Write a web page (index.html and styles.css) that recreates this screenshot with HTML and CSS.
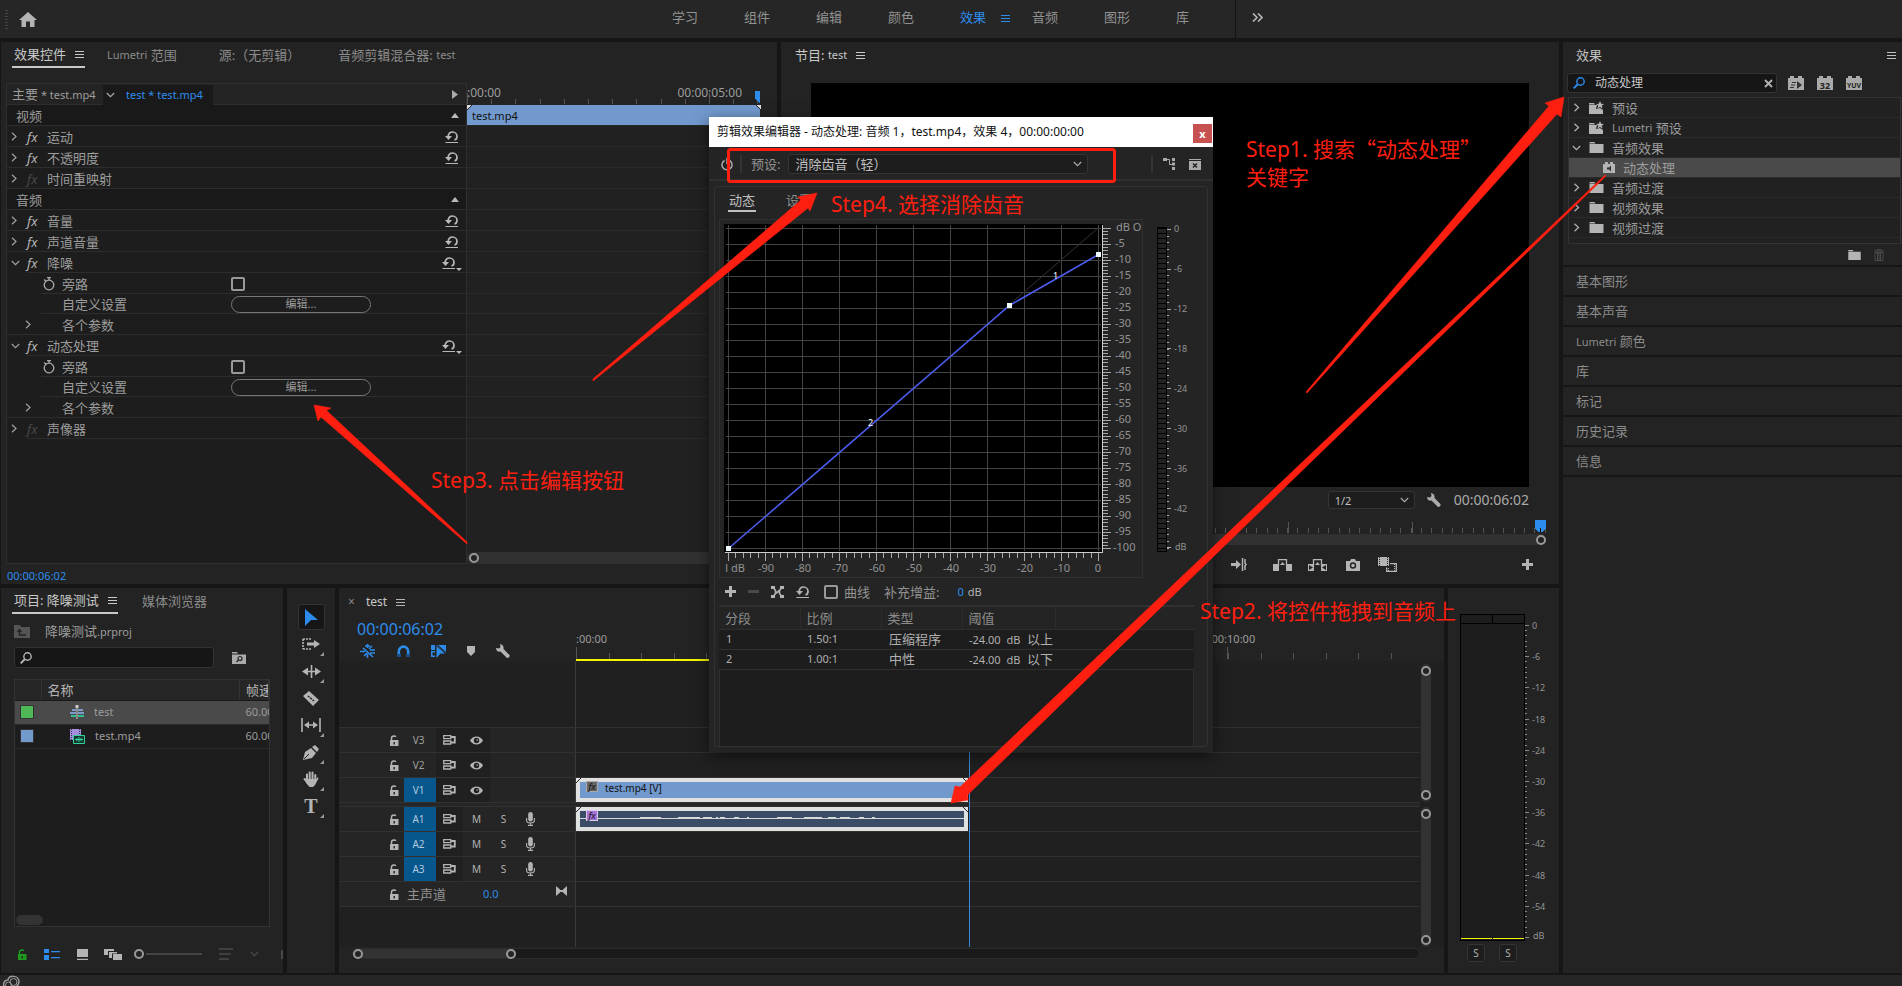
FILE: index.html
```html
<!DOCTYPE html>
<html lang="zh-CN">
<head>
<meta charset="utf-8">
<title>降噪测试.prproj</title>
<link rel="stylesheet" href="styles.css">
</head>
<body>
<svg class="defs" aria-hidden="true">
  <symbol id="i-menu" viewBox="0 0 9 9"><path d="M0 1.500h9M0 4.500h9M0 7.500h9" stroke="currentColor" shape-rendering="crispEdges"/></symbol>
  <symbol id="i-right" viewBox="0 0 6 9"><path d="M1 .8l4 3.700-4 3.700" fill="none" stroke="currentColor" stroke-width="1.200"/></symbol>
  <symbol id="i-down" viewBox="0 0 9 6"><path d="M.8 1l3.700 3.600L8.200 1" fill="none" stroke="currentColor" stroke-width="1.200"/></symbol>
  <symbol id="i-up" viewBox="0 0 8 5"><path d="M0 5l4-5 4 5z" fill="currentColor"/></symbol>
  <symbol id="i-reset" viewBox="0 0 13 12"><path d="M3 5.500C3.500 2.500 5 1 7.500 1 10 1 12 3 12 5.200 12 7.200 11 8.700 9.500 9" fill="none" stroke="currentColor" stroke-width="1.700"/><path d="M0 5h7L3.500 9z" fill="currentColor"/><path d="M.5 11.500H13" stroke="currentColor"/></symbol>
  <symbol id="i-watch" viewBox="0 0 12 14"><circle cx="6" cy="8" r="4.800" fill="none" stroke="currentColor" stroke-width="1.300"/><path d="M4 .7h4M6 1v2M1.200 2.500l2 2" stroke="currentColor" stroke-width="1.300"/></symbol>
  <symbol id="i-search" viewBox="0 0 12 12"><circle cx="7.500" cy="4.500" r="3.700" fill="none" stroke="currentColor" stroke-width="1.400"/><path d="M5 7L.7 11.300" stroke="currentColor" stroke-width="1.900"/></symbol>
  <symbol id="i-folder" viewBox="0 0 14 11"><path d="M0 0h5l1 1.500H0zM0 2h14v9H0z" fill="currentColor"/></symbol>
  <symbol id="i-star" viewBox="0 0 15 13"><path d="M0 2h5l1 1.500H0zM0 4h8l-1 4 4-1 3 2v4H0z" fill="currentColor"/><path d="M11 0l1.200 2.700 2.800.2-2.200 1.800.8 2.800L11 6 8.400 7.500l.8-2.800L7 2.900l2.800-.2z" fill="currentColor"/></symbol>
  <symbol id="i-lock" viewBox="0 0 10 11"><path d="M1 5h8.500v6H1z" fill="currentColor"/><path d="M2.500 5V3.200C2.500 1.800 3.500 1 5 1c.8 0 1.500.3 1.900.8" fill="none" stroke="currentColor" stroke-width="1.500"/><path d="M5.200 7v2.500" stroke="#222" stroke-width="1.400"/></symbol>
  <symbol id="i-sync" viewBox="0 0 13 10"><path d="M.7.7h7.100v3H.7zM.7 6h7.100v3H.7z" fill="none" stroke="currentColor" stroke-width="1.300"/><path d="M8 2h3.800v5.500H8" fill="none" stroke="currentColor" stroke-width="1.800"/></symbol>
  <symbol id="i-eye" viewBox="0 0 13 9"><path d="M0 4.500C3-.9 10-.9 13 4.500 10 9.900 3 9.900 0 4.500z" fill="currentColor"/><circle cx="6.500" cy="4.500" r="2.700" fill="#222"/><circle cx="7.200" cy="4" r=".8" fill="currentColor"/></symbol>
  <symbol id="i-mic" viewBox="0 0 9 14"><rect x="2.200" width="4.600" height="9.500" rx="2.300" fill="currentColor"/><path d="M.6 6v2.500c0 3.300 7.800 3.300 7.800 0V6M4.500 11v2M2 13.400h5" fill="none" stroke="currentColor" stroke-width="1.100"/></symbol>
  <symbol id="i-wrench" viewBox="0 0 14 14"><path d="M4 0L4.500 3 3 4.500 0 4c0 2.500 2 4.200 4.500 3.600L11 14c1.500.2 3-1.300 2.700-2.800L7.500 5C8 2.500 6.500.2 4 0z" fill="currentColor"/></symbol>
  <symbol id="i-plus" viewBox="0 0 11 11"><path d="M5.500 0v11M0 5.500h11" stroke="currentColor" stroke-width="3"/></symbol>
  <symbol id="i-brick" viewBox="0 0 16 14"><path d="M0 2h2V0h4v2h4V0h4v2h2v12H0z" fill="currentColor"/></symbol>
</svg>

<header class="topbar">
  <span class="grip"></span>
  <button class="home" aria-label="主页"><svg width="18" height="15" viewBox="0 0 18 15"><path d="M9 0L0 8h2.500v7h4.500V9.500h4V15h4.500V8H18z" fill="currentColor"/></svg></button>
  <nav class="spaces">
    <a href="#">学习</a><a href="#">组件</a><a href="#">编辑</a><a href="#">颜色</a>
    <a href="#" class="on">效果<svg width="9" height="9"><use href="#i-menu"/></svg></a>
    <a href="#">音频</a><a href="#">图形</a><a href="#">库</a>
  </nav>
  <button class="more" aria-label="更多"><svg width="11" height="9" viewBox="0 0 11 9"><path d="M1 .5l4 4-4 4M6 .5l4 4-4 4" fill="none" stroke="currentColor" stroke-width="1.700"/></svg></button>
</header>

<main class="work">
  <div class="left">
    <div class="toprow">
      <section class="panel fxpanel">
        <div class="tabs">
          <a href="#" class="tab on">效果控件<svg width="9" height="9"><use href="#i-menu"/></svg></a>
          <a href="#" class="tab"><span class="en">Lumetri</span>&nbsp;范围</a>
          <a href="#" class="tab src">源:（无剪辑）</a>
          <a href="#" class="tab">音频剪辑混合器:&nbsp;<span class="en">test</span></a>
        </div>
        <div class="fxbox">
          <div class="fxrow first">
            <div class="l"><span class="master">主要<span class="en"> * test.mp4</span></span><span class="seq"><svg width="9" height="6"><use href="#i-down"/></svg><a href="#" class="en">test * test.mp4</a></span><svg class="play" width="6" height="9" viewBox="0 0 6 9"><path d="M0 0l6 4.500L0 9z" fill="currentColor"/></svg></div>
            <div class="r ruler"><span>:00:00</span><span>00:00:05:00</span>
              <svg class="ticks" width="294" height="22" viewBox="0 0 294 22" shape-rendering="crispEdges"><path d="M0 18.500H294" stroke="#555" stroke-width="5" stroke-dasharray="1 23.200"/><path d="M.5 10v11M242.500 10v11" stroke="#555"/><path d="M288 8h5v12l-5-4z" fill="#2d8ceb"/></svg>
            </div>
          </div>
          <div class="fxrow sec"><div class="l">视频<svg class="end" width="8" height="5"><use href="#i-up"/></svg></div><div class="r clip">test.mp4<svg class="corners" width="294" height="5" viewBox="0 0 294 5"><path d="M0 0h5L0 5zM294 0h-5l5 5z" fill="#ddd"/><path d="M5 0L0 5M289 0l5 5" stroke="#222"/></svg></div></div>
          <div class="fxrow"><div class="l"><svg class="chev" width="6" height="9"><use href="#i-right"/></svg><i class="fx">fx</i>运动<svg class="end" width="13" height="12"><use href="#i-reset"/></svg></div><div class="r"></div></div>
          <div class="fxrow"><div class="l"><svg class="chev" width="6" height="9"><use href="#i-right"/></svg><i class="fx">fx</i>不透明度<svg class="end" width="13" height="12"><use href="#i-reset"/></svg></div><div class="r"></div></div>
          <div class="fxrow"><div class="l"><svg class="chev" width="6" height="9"><use href="#i-right"/></svg><i class="fx off">fx</i>时间重映射</div><div class="r"></div></div>
          <div class="fxrow sec"><div class="l">音频<svg class="end" width="8" height="5"><use href="#i-up"/></svg></div><div class="r"></div></div>
          <div class="fxrow"><div class="l"><svg class="chev" width="6" height="9"><use href="#i-right"/></svg><i class="fx">fx</i>音量<svg class="end" width="13" height="12"><use href="#i-reset"/></svg></div><div class="r"></div></div>
          <div class="fxrow"><div class="l"><svg class="chev" width="6" height="9"><use href="#i-right"/></svg><i class="fx">fx</i>声道音量<svg class="end" width="13" height="12"><use href="#i-reset"/></svg></div><div class="r"></div></div>
          <div class="fxrow open"><div class="l"><svg class="chev" width="9" height="6"><use href="#i-down"/></svg><i class="fx">fx</i>降噪<span class="end drop"><svg width="13" height="12"><use href="#i-reset"/></svg></span></div><div class="r"></div></div>
          <div class="fxrow sub"><div class="l"><svg class="watch" width="12" height="14"><use href="#i-watch"/></svg><label for="by1">旁路</label><input type="checkbox" id="by1"></div><div class="r"></div></div>
          <div class="fxrow sub short"><div class="l"><span class="name">自定义设置</span><button class="edit">编辑...</button></div><div class="r"></div></div>
          <div class="fxrow par"><div class="l"><svg class="chev" width="6" height="9"><use href="#i-right"/></svg><span class="name">各个参数</span></div><div class="r"></div></div>
          <div class="fxrow open"><div class="l"><svg class="chev" width="9" height="6"><use href="#i-down"/></svg><i class="fx">fx</i>动态处理<span class="end drop"><svg width="13" height="12"><use href="#i-reset"/></svg></span></div><div class="r"></div></div>
          <div class="fxrow sub"><div class="l"><svg class="watch" width="12" height="14"><use href="#i-watch"/></svg><label for="by2">旁路</label><input type="checkbox" id="by2"></div><div class="r"></div></div>
          <div class="fxrow sub short"><div class="l"><span class="name">自定义设置</span><button class="edit">编辑...</button></div><div class="r"></div></div>
          <div class="fxrow par"><div class="l"><svg class="chev" width="6" height="9"><use href="#i-right"/></svg><span class="name">各个参数</span></div><div class="r"></div></div>
          <div class="fxrow open"><div class="l"><svg class="chev" width="6" height="9"><use href="#i-right"/></svg><i class="fx off">fx</i>声像器</div><div class="r"></div></div>
          <div class="fxrow rest"><div class="l"></div><div class="r"><div class="hbar"><span class="knob"></span></div></div></div>
        </div>
        <div class="fxtime">00:00:06:02</div>
      </section>

      <section class="panel program">
        <div class="tabs"><a href="#" class="tab lit">节目:&nbsp;<span class="en">test</span><svg width="9" height="9"><use href="#i-menu"/></svg></a></div>
        <div class="video"></div>
        <div class="pinfo">
          <select class="drop-sel" aria-label="回放分辨率"><option>1/2</option></select>
          <svg width="14" height="14"><use href="#i-wrench"/></svg>
          <span class="ptime">00:00:06:02</span>
        </div>
        <div class="pscrub">
          <svg width="343" height="14" viewBox="0 0 343 14" shape-rendering="crispEdges"><path d="M12 10.500H343" stroke="#555" stroke-width="5" stroke-dasharray="1 9.300"/><path d="M85.500 2v11M209.500 2v11" stroke="#555"/><path d="M332 0h11v8l-3 4h-5l-3-4z" fill="#2d8ceb"/><path d="M337.500 8v4" stroke="#111"/></svg>
          <div class="hbar"><span class="knob"></span></div>
        </div>
        <div class="pbtns">
          <button aria-label="转到出点"><svg width="16" height="13" viewBox="0 0 16 13"><path d="M0 5h5V2l5 4.500L5 11V8H0z" fill="currentColor"/><path d="M11.500 0v13M14 1v4l1 1.500L14 8v4" fill="none" stroke="currentColor" stroke-width="1.500"/></svg></button>
          <button aria-label="提升"><svg width="19" height="12" viewBox="0 0 19 12"><path d="M0 5h6v7H0zM13 5h6v7h-6z" fill="currentColor"/><path d="M5.500 7V.7h8V7" fill="none" stroke="currentColor" stroke-width="1.300"/><path d="M7 6l2.500-3L12 6z" fill="currentColor"/></svg></button>
          <button aria-label="提取"><svg width="19" height="12" viewBox="0 0 19 12"><path d="M0 5h6v7H0zM13 5h6v7h-6z" fill="currentColor"/><path d="M5.500 7V.7h8V7" fill="none" stroke="currentColor" stroke-width="1.300"/><path d="M7 6l2.500-3L12 6z" fill="currentColor"/><path d="M1 6l4 2.500L1 11zM18 6l-4 2.500 4 2.500z" fill="#232323"/></svg></button>
          <button aria-label="导出帧"><svg width="14" height="12" viewBox="0 0 14 12"><path d="M0 2h4l1-2h4l1 2h4v10H0z" fill="currentColor"/><circle cx="7" cy="6.500" r="2.500" fill="none" stroke="#232323" stroke-width="1.400"/></svg></button>
          <button aria-label="比较视图"><svg width="19" height="15" viewBox="0 0 19 15"><path d="M0 0h11v9H0z" fill="currentColor"/><path d="M1.500 0v9M9.500 0v9" stroke="#232323" stroke-dasharray="1 1"/><path d="M8.700 10.500v3.800h9.600V6.700H12" fill="none" stroke="currentColor" stroke-width="1.300"/><path d="M16.500 7v7M10.500 11v3" stroke="currentColor" stroke-dasharray="1 1"/></svg></button>
          <button class="add" aria-label="按钮编辑器"><svg width="11" height="11"><use href="#i-plus"/></svg></button>
        </div>
      </section>
    </div>

    <div class="botrow">
      <section class="panel project">
        <div class="tabs">
          <a href="#" class="tab on">项目: 降噪测试<svg width="9" height="9"><use href="#i-menu"/></svg></a>
          <a href="#" class="tab">媒体浏览器</a>
        </div>
        <div class="pfile"><svg width="16" height="13" viewBox="0 0 16 13"><path d="M0 0h6l1 2h9v11H0z" fill="#555"/><path d="M5.500 5v5H12M3.500 7l2-2.500 2 2.500" fill="none" stroke="#222" stroke-width="1.300"/></svg><span>降噪测试<span class="en">.prproj</span></span></div>
        <div class="psearch">
          <label class="field"><svg width="12" height="12"><use href="#i-search"/></svg><input type="text" aria-label="搜索"></label>
          <button aria-label="从查询创建新的搜索素材箱"><svg width="14" height="12" viewBox="0 0 14 12"><path d="M0 0h5l1 1.500H0zM0 2.500h14V12H0z" fill="currentColor"/><circle cx="8" cy="6.500" r="2" fill="none" stroke="#232323" stroke-width="1.200"/><path d="M6.500 8L4.500 10" stroke="#232323" stroke-width="1.300"/></svg></button>
        </div>
        <div class="bin">
          <table>
            <thead><tr><th class="c0"></th><th class="c1">名称</th><th class="c2">帧速率</th></tr></thead>
            <tbody>
              <tr class="sel"><td><span class="sw green"></span></td><td><span class="item"><svg width="14" height="14" viewBox="0 0 14 14"><path d="M2 5h4M8 5h5M0 8h6M8 8h6" stroke="#7c9bc8" stroke-width="2"/><path d="M1 11h5M8 11h6" stroke="#2fbf8f" stroke-width="2"/><path d="M7 1v13" stroke="#ccc"/><path d="M5.500 0h3v3h-3z" fill="#ccc"/></svg>test</span></td><td>60.00</td></tr>
              <tr><td><span class="sw blue"></span></td><td><span class="item"><svg width="15" height="15" viewBox="0 0 15 15"><path d="M0 0h11v11H0z" fill="#a58ede"/><path d="M1.500 0v11M9.500 0v11" stroke="#3c2f5c" stroke-dasharray="1 1"/><path d="M3.500 6.500h11v8h-11z" fill="#16382e" stroke="#2fd39a"/><path d="M5 10.500h8M7 9v3M9 8v5M11 9v3" stroke="#2fd39a"/></svg>test.mp4</span></td><td>60.00</td></tr>
            </tbody>
          </table>
          <span class="thumb"></span>
        </div>
        <div class="pfoot">
          <svg class="glock" width="10" height="11"><use href="#i-lock"/></svg>
          <svg width="16" height="11" viewBox="0 0 16 11"><path d="M0 0h5v4H0zM0 6h5v5H0zM7 2h9v1.200H7zM7 8h9v1.200H7z" fill="#2d8ceb"/></svg>
          <svg width="11" height="11" viewBox="0 0 11 11"><path d="M0 0h11v8H0zM0 9.700h11V11H0z" fill="currentColor"/></svg>
          <svg width="18" height="11" viewBox="0 0 18 11"><path d="M0 0h10v2H4v4H0z" fill="currentColor"/><path d="M5 3h8v1.500H8V9H5z" fill="currentColor"/><path d="M9 5h9v6H9z" fill="currentColor"/></svg>
          <span class="zoom"><span class="knob"></span><i></i></span>
          <svg class="dim" width="14" height="12" viewBox="0 0 14 12"><path d="M0 1h14M0 6h12M0 11h10" stroke="currentColor" stroke-width="1.600"/></svg>
          <svg class="dim" width="9" height="6"><use href="#i-down"/></svg>
          <span class="clipped"></span>
        </div>
      </section>

      <section class="panel tools">
        <button class="on" aria-label="选择"><svg width="13" height="17" viewBox="0 0 13 17"><path d="M0 0l13 11H6l-6 6z" fill="currentColor"/></svg></button>
        <button class="m" aria-label="轨道选择"><svg width="18" height="12" viewBox="0 0 18 12"><path d="M1 1h9M1 11h9M1 1v10" stroke="currentColor" stroke-width="1.600" stroke-dasharray="2 1"/><path d="M5 4.500h7V2l6 4-6 4V7.500H5z" fill="currentColor"/></svg></button>
        <button class="m" aria-label="波纹编辑"><svg width="19" height="13" viewBox="0 0 19 13"><path d="M9.500 0v13M3 6.500h13" stroke="currentColor" stroke-width="1.600"/><path d="M0 6.500l6-4v8zM19 6.500l-6-4v8z" fill="currentColor"/></svg></button>
        <button aria-label="剃刀"><svg width="16" height="15" viewBox="0 0 16 15"><path d="M0 5l6-5 10 9-6 6z" fill="currentColor"/><path d="M5 5l6 5" stroke="#232323" stroke-width="1.500" stroke-dasharray="2 1"/></svg></button>
        <button class="m" aria-label="外滑"><svg width="20" height="14" viewBox="0 0 20 14"><path d="M1 0v14M19 0v14M5 7h10" stroke="currentColor" stroke-width="1.600"/><path d="M3 7l5-3.500v7zM17 7l-5-3.500v7z" fill="currentColor"/></svg></button>
        <button class="m" aria-label="钢笔"><svg width="16" height="15" viewBox="0 0 16 15"><path d="M0 15L2 7l6-4 5 5-4 5zM9 2l3-2 4 4-2 3z" fill="currentColor"/><path d="M1 14l5-5" stroke="#232323"/></svg></button>
        <button class="m" aria-label="手形"><svg width="16" height="16" viewBox="0 0 16 16"><path d="M4 9V3.500M6.700 8V1.500M9.500 8V1.500M12.300 9V4M1.500 8L5 12" stroke="currentColor" stroke-width="2" stroke-linecap="round"/><path d="M3 8h10.300L15 6l.5 1.500L12 14l-2 2H6.500L3 12z" fill="currentColor"/></svg></button>
        <button class="m type" aria-label="文字">T</button>
      </section>

      <section class="panel timeline">
        <div class="tltabs"><span class="x">×</span><a href="#">test</a><svg width="9" height="9"><use href="#i-menu"/></svg></div>
        <div class="tltop">
          <div class="tlctl">
            <div class="tc">00:00:06:02</div>
            <div class="tlicons">
              <svg class="b" width="16" height="14" viewBox="0 0 16 14"><path d="M7.500 0v4M7.500 10v4M5 2h5M0 7.500h5M10 6h5M10 9h5M3 4l10 9M4 12l3-3M12 2L9 5" stroke="currentColor" stroke-width="1.600"/></svg>
              <svg class="b" width="13" height="12" viewBox="0 0 13 12"><path d="M1.800 12V6.500C1.800 0 11.200 0 11.200 6.500V12" fill="none" stroke="currentColor" stroke-width="2.600"/><path d="M0 9h4v3H0zM9 9h4v3H9z" fill="#1b4f86"/></svg>
              <svg class="b" width="15" height="13" viewBox="0 0 15 13"><path d="M0 0h4v5H0zM5 0h10v8L5.500 0zM0 6h4v6H0z" fill="currentColor"/><path d="M1.500 7.500H4v3H1.500z" fill="#232323"/><path d="M5.500 1l8.500 7.500H9.500L5.500 13z" fill="currentColor"/><path d="M6.500 0l8.500 7.500" stroke="#232323"/></svg>
              <svg width="8" height="10" viewBox="0 0 8 10"><path d="M0 0h8v6L4 10 0 6z" fill="currentColor"/></svg>
              <svg width="14" height="14"><use href="#i-wrench"/></svg>
            </div>
          </div>
          <div class="tlruler">
            <span>:00:00</span><span class="ten">00:00:10:00</span>
            <svg width="846" height="14" viewBox="0 0 846 14" shape-rendering="crispEdges"><path d="M0 9H846" stroke="#555" stroke-width="6" stroke-dasharray="1 31.600"/><path d="M.5 0v12M651.500 0v12" stroke="#555"/><path d="M0 12h392v2H0z" fill="#f5f500"/></svg>
          </div>
        </div>
        <div class="tlbody">
          <div class="tracks">
            <div class="trk gap"><div class="h"></div><div class="lane"></div></div>
            <div class="trk"><div class="h"><svg width="10" height="11"><use href="#i-lock"/></svg><b>V3</b><i><svg width="13" height="10"><use href="#i-sync"/></svg></i><i><svg width="13" height="9"><use href="#i-eye"/></svg></i></div><div class="lane"></div></div>
            <div class="trk"><div class="h"><svg width="10" height="11"><use href="#i-lock"/></svg><b>V2</b><i><svg width="13" height="10"><use href="#i-sync"/></svg></i><i><svg width="13" height="9"><use href="#i-eye"/></svg></i></div><div class="lane"></div></div>
            <div class="trk"><div class="h"><svg width="10" height="11"><use href="#i-lock"/></svg><b class="on">V1</b><i><svg width="13" height="10"><use href="#i-sync"/></svg></i><i><svg width="13" height="9"><use href="#i-eye"/></svg></i></div><div class="lane"><div class="vclip"><em>fx</em>test.mp4 [V]<svg class="cut" width="392" height="6" viewBox="0 0 392 6"><path d="M0 5L5 0M387 0l5 5" stroke="#222"/></svg></div></div></div>
            <div class="trk split"></div>
            <div class="trk"><div class="h"><svg width="10" height="11"><use href="#i-lock"/></svg><b class="on">A1</b><i><svg width="13" height="10"><use href="#i-sync"/></svg></i><button>M</button><button>S</button><svg class="mic" width="9" height="14"><use href="#i-mic"/></svg></div><div class="lane"><div class="aclip"><em>fx</em><svg class="wave" width="384" height="16" viewBox="0 0 384 16"><path d="M0 7.500H384" stroke="#d8d8d8"/><path d="M60 7h21M98 7h22M123 7h9M136 7h2M140 7h5M154 7h5M167 7h2M197 7h15M224 7h18M248 7h8M260 7h10M279 7h5M292 7h3" stroke="#d8d8d8" stroke-width="2"/></svg><svg class="cut" width="392" height="6" viewBox="0 0 392 6"><path d="M0 5L5 0M387 0l5 5" stroke="#222"/></svg></div></div></div>
            <div class="trk"><div class="h"><svg width="10" height="11"><use href="#i-lock"/></svg><b class="on">A2</b><i><svg width="13" height="10"><use href="#i-sync"/></svg></i><button>M</button><button>S</button><svg class="mic" width="9" height="14"><use href="#i-mic"/></svg></div><div class="lane"></div></div>
            <div class="trk"><div class="h"><svg width="10" height="11"><use href="#i-lock"/></svg><b class="on">A3</b><i><svg width="13" height="10"><use href="#i-sync"/></svg></i><button>M</button><button>S</button><svg class="mic" width="9" height="14"><use href="#i-mic"/></svg></div><div class="lane"></div></div>
            <div class="trk"><div class="h mst"><svg width="10" height="11"><use href="#i-lock"/></svg><span class="mn">主声道</span><span class="mv">0.0</span><svg class="kf" width="11" height="10" viewBox="0 0 11 10"><path d="M0 0l4 3.500v3L0 10zM11 0L7 3.500v3L11 10z" fill="currentColor"/><path d="M4 5h3" stroke="currentColor" stroke-width="2"/></svg></div><div class="lane"></div></div>
            <div class="trk tail"><div class="h"></div><div class="lane"></div></div>
            <span class="playhead"></span>
          </div>
          <div class="vbars"><div class="vbar v1"><span class="knob"></span><span class="knob"></span></div><div class="vbar v2"><span class="knob"></span><span class="knob"></span></div></div>
        </div>
        <div class="tlscroll"><div class="tthumb"><span class="knob"></span><span class="knob"></span></div></div>
      </section>

      <section class="panel meters">
        <div class="mrow">
          <div class="mbox"><div class="mtop"><i></i><i></i></div><div class="mmain"><i></i><i></i></div></div>
          <svg width="34" height="326" viewBox="0 0 34 326"><g shape-rendering="crispEdges" stroke="#888"><path d="M1 11V324" stroke-width="2" stroke-dasharray="1 4.200"/><path d="M2 11V324" stroke-width="4" stroke-dasharray="1 30.200"/></g>
            <g class="t9"><text x="7" y="15">0</text><text x="7" y="46">-6</text><text x="7" y="77">-12</text><text x="7" y="109">-18</text><text x="7" y="140">-24</text><text x="7" y="171">-30</text><text x="7" y="202">-36</text><text x="7" y="233">-42</text><text x="7" y="265">-48</text><text x="7" y="296">-54</text><text x="8" y="325">dB</text></g></svg>
        </div>
        <div class="solo"><button>S</button><button>S</button></div>
      </section>
    </div>
  </div>

  <aside class="panel effects">
    <div class="ehead"><h2>效果</h2><svg width="9" height="9"><use href="#i-menu"/></svg></div>
    <div class="esearch">
      <label class="field"><svg class="b" width="12" height="12"><use href="#i-search"/></svg><input type="text" value="动态处理" aria-label="搜索效果"><button aria-label="清除"><svg width="9" height="9" viewBox="0 0 9 9"><path d="M1 1l7 7M8 1L1 8" stroke="currentColor" stroke-width="1.800"/></svg></button></label>
      <button class="brick" aria-label="加速效果"><svg width="16" height="14"><use href="#i-brick"/></svg><span><svg width="12" height="8" viewBox="0 0 12 8"><path d="M2 1.500h4M1 4h4M0 6.500h4" stroke="#333"/><path d="M7 0l5 4-5 4z" fill="#333"/></svg></span></button>
      <button class="brick"><svg width="16" height="14"><use href="#i-brick"/></svg><span>32</span></button>
      <button class="brick yuv"><svg width="16" height="14"><use href="#i-brick"/></svg><span>YUV</span></button>
    </div>
    <ul class="tree">
      <li><svg class="chev" width="6" height="9"><use href="#i-right"/></svg><svg width="15" height="13"><use href="#i-star"/></svg>预设</li>
      <li><svg class="chev" width="6" height="9"><use href="#i-right"/></svg><svg width="15" height="13"><use href="#i-star"/></svg><span class="en">Lumetri</span>&nbsp;预设</li>
      <li><svg class="chev" width="9" height="6"><use href="#i-down"/></svg><svg width="15" height="11"><use href="#i-folder"/></svg>音频效果</li>
      <li class="sel"><svg class="fxi" width="12" height="11" viewBox="0 0 12 11"><path d="M0 2h2V0h3v2h2V0h3v2h2v9H0z" fill="currentColor"/><path d="M4 5.500h2l2-2v6l-2-2H4z" fill="#333"/></svg>动态处理</li>
      <li><svg class="chev" width="6" height="9"><use href="#i-right"/></svg><svg width="15" height="11"><use href="#i-folder"/></svg>音频过渡</li>
      <li><svg class="chev" width="6" height="9"><use href="#i-right"/></svg><svg width="15" height="11"><use href="#i-folder"/></svg>视频效果</li>
      <li><svg class="chev" width="6" height="9"><use href="#i-right"/></svg><svg width="15" height="11"><use href="#i-folder"/></svg>视频过渡</li>
    </ul>
    <div class="efoot"><button aria-label="新建素材箱"><svg width="13" height="10" viewBox="0 0 14 11"><use href="#i-folder" width="14" height="11"/></svg></button><button class="dim" aria-label="删除"><svg width="10" height="12" viewBox="0 0 10 12"><path d="M0 2h10M3 2V.6h4V2M1 3.500h8V11.500H1zM3.500 4v7M5 4v7M6.500 4v7" fill="none" stroke="currentColor"/></svg></button></div>
    <div class="acc"><a href="#">基本图形</a><a href="#">基本声音</a><a href="#"><span class="en">Lumetri</span> 颜色</a><a href="#">库</a><a href="#">标记</a><a href="#">历史记录</a><a href="#">信息</a></div>
  </aside>
</main>

<footer class="status"><svg width="18" height="13" viewBox="0 0 18 13"><path d="M3 12C0 10 2 5 6 5c1-5 10-5 11 1 0 5-4 8-11 7" fill="none" stroke="#999" stroke-width="1.500"/><circle cx="6.500" cy="10" r="3" fill="none" stroke="#999"/><circle cx="11.500" cy="7" r="3.500" fill="none" stroke="#999"/></svg></footer>

<div class="dialog" role="dialog" aria-label="剪辑效果编辑器">
  <div class="dtitle"><span>剪辑效果编辑器 - 动态处理: 音频 1，test.mp4，效果 4，00:00:00:00</span><button aria-label="关闭">x</button></div>
  <div class="dbar">
    <svg class="pow" width="12" height="13" viewBox="0 0 12 13"><path d="M3.500 2.500a5 5 0 1 0 5 0M6 0v6" fill="none" stroke="currentColor" stroke-width="1.500"/></svg>
    <span class="sep"></span>
    <label for="preset">预设:</label>
    <select id="preset" class="drop-sel"><option>消除齿音（轻）</option></select>
    <span class="sep far"></span>
    <svg width="12" height="12" viewBox="0 0 12 12"><path d="M0 0h4v3H0zM9 0h3v3H9zM9 4.500h3v3H9zM9 9h3v3H9z" fill="currentColor"/><path d="M4 1.500h2.500v5H9" fill="none" stroke="currentColor"/></svg>
    <svg class="mx" width="12" height="11" viewBox="0 0 12 11"><path d="M0 0h12v1H0zM0 2h12v9H0z" fill="currentColor"/><path d="M4 4.500l4 4M8 4.500l-4 4" stroke="#222" stroke-width="1.400"/></svg>
  </div>
  <div class="dbody">
    <div class="dtabs"><a href="#" class="on">动态</a><a href="#">设置</a></div>
    <div class="graphs">
      <svg class="chart" width="424" height="359" viewBox="0 0 424 359">
        <rect x="5" y="5" width="379" height="328" fill="#000"/>
        <g shape-rendering="crispEdges" stroke="#444"><path d="M9 169H384" stroke-width="326" stroke-dasharray="1 36"/><path d="M194 9V333" stroke-width="375" stroke-dasharray="1 15"/></g>
        <g shape-rendering="crispEdges" stroke="#aaa"><path d="M383.500 6v327.500H6" fill="none" stroke="#ccc"/><path d="M386.500 9V332" stroke-width="5" stroke-dasharray="1 2.200"/><path d="M388 9V332" stroke-width="8" stroke-dasharray="1 15"/><path d="M9 336H381" stroke-width="5" stroke-dasharray="1 6.400"/><path d="M9 338H381" stroke-width="8" stroke-dasharray="1 36"/></g>
        <path d="M290 86L379 9" stroke="#333"/>
        <path d="M9.500 329.500L290.500 86.500 379.500 35.500" fill="none" stroke="#4c5cec" stroke-width="1.600"/>
        <g fill="#effcff"><rect x="7" y="327" width="5" height="5"/><rect x="288" y="84" width="5" height="5"/><rect x="377" y="33" width="5" height="5"/></g>
        <g class="t9"><text class="w" x="334" y="60">1</text><text class="w" x="149" y="207">2</text></g>
        <g class="t11"><text x="397" y="12">dB O</text><text x="396" y="28">-5</text><text x="396" y="44">-10</text><text x="396" y="60">-15</text><text x="396" y="76">-20</text><text x="396" y="92">-25</text><text x="396" y="108">-30</text><text x="396" y="124">-35</text><text x="396" y="140">-40</text><text x="396" y="156">-45</text><text x="396" y="172">-50</text><text x="396" y="188">-55</text><text x="396" y="204">-60</text><text x="396" y="220">-65</text><text x="396" y="236">-70</text><text x="396" y="252">-75</text><text x="396" y="268">-80</text><text x="396" y="284">-85</text><text x="396" y="300">-90</text><text x="396" y="316">-95</text><text x="394" y="332">-100</text></g>
        <g class="t11 mid"><text x="16" y="353">l dB</text><text x="47" y="353">-90</text><text x="84" y="353">-80</text><text x="121" y="353">-70</text><text x="158" y="353">-60</text><text x="195" y="353">-50</text><text x="232" y="353">-40</text><text x="269" y="353">-30</text><text x="306" y="353">-20</text><text x="343" y="353">-10</text><text x="379" y="353">0</text></g>
      </svg>
      <svg class="gain" width="40" height="340" viewBox="0 0 40 340">
        <rect x="0" y="7" width="10" height="325" fill="#000"/><path d="M5 9V331" stroke="#222" stroke-width="8" stroke-dasharray="4 1"/>
        <g shape-rendering="crispEdges" stroke="#aaa"><path d="M11 9V331" stroke-width="2" stroke-dasharray="1 5.640"/><path d="M12 9V331" stroke-width="4" stroke-dasharray="1 38.800"/></g>
        <g class="t9"><text x="17" y="12">0</text><text x="17" y="52">-6</text><text x="17" y="92">-12</text><text x="17" y="132">-18</text><text x="17" y="172">-24</text><text x="17" y="212">-30</text><text x="17" y="252">-36</text><text x="17" y="292">-42</text><text x="18" y="330">dB</text></g>
      </svg>
    </div>
    <div class="dctl">
      <button aria-label="添加点"><svg width="11" height="11"><use href="#i-plus"/></svg></button>
      <button class="dim" aria-label="删除点"><svg width="11" height="11" viewBox="0 0 11 11"><path d="M0 5.500h11" stroke="currentColor" stroke-width="3"/></svg></button>
      <button aria-label="反转"><svg width="13" height="14" viewBox="0 0 13 14"><path d="M2 2l2.500 3.500v3L2 12M11 2L8.500 5.500v3L11 12M4.500 8.500l4-3" fill="none" stroke="currentColor" stroke-width="1.600"/><path d="M0 1h4v3H0zM9 1h4v3H9zM0 10h4v3H0zM9 10h4v3H9z" fill="currentColor"/></svg></button>
      <button aria-label="重置"><svg width="13" height="12"><use href="#i-reset"/></svg></button>
      <label class="spl"><input type="checkbox">曲线</label>
      <span class="mk">补充增益:</span><span class="zero">0</span><span class="en">dB</span>
    </div>
    <table class="segs">
      <thead><tr><th>分段</th><th>比例</th><th>类型</th><th>阈值</th><th></th></tr></thead>
      <tbody>
        <tr><td class="en">1</td><td class="en">1.50:1</td><td>压缩程序</td><td><span class="en">-24.00&nbsp; dB</span>&nbsp; 以上</td><td></td></tr>
        <tr><td class="en">2</td><td class="en">1.00:1</td><td>中性</td><td><span class="en">-24.00&nbsp; dB</span>&nbsp; 以下</td><td></td></tr>
      </tbody>
    </table>
    <div class="segrest"></div>
  </div>
</div>

<div class="notes">
  <svg width="1902" height="986" viewBox="0 0 1902 986">
    <rect x="728.500" y="149.500" width="386" height="32" rx="2" fill="none" stroke="#ff1f10" stroke-width="3"/>
    <g fill="#ff1f10" stroke="#ff1f10" stroke-width=".6">
      <path d="M1564 97L1545 103 1549 106 1306 392 1307 393 1557 114 1561 117z"/>
      <path d="M951 803L968 800 967.500 795 1606 176 1605 175 960 787 955 786z"/>
      <path d="M314 405L331 408 326.500 410.500 467 542 467 544 321 417 318 421z"/>
      <path d="M817 193L798 197 801 200 593 379 593 381 808 208 810 211z"/>
    </g>
  </svg>
  <p class="n1">Step1. 搜索<span class="cjk">“动态处理”</span><br>关键字</p>
  <p class="n2">Step2. 将控件拖拽到音频上</p>
  <p class="n3">Step3. 点击编辑按钮</p>
  <p class="n4">Step4. 选择消除齿音</p>
</div>
</body>
</html>
```

FILE: styles.css
```css
* { box-sizing: border-box; }
html, body { height: 100%; }
body {
  margin: 0;
  min-height: 960px;
  display: flex;
  flex-direction: column;
  position: relative;
  overflow: hidden;
  background: #161616;
  color: #9c9c9c;
  font: 13px/18px "Noto Sans", "Noto Sans CJK SC", sans-serif;
  white-space: nowrap;
}
a { color: inherit; text-decoration: none; }
button { border: 0; padding: 0; background: none; color: inherit; font: inherit; display: flex; align-items: center; justify-content: center; }
svg { flex: none; display: block; }
i, em { font-style: normal; }
input { font: inherit; color: inherit; }
.defs { position: absolute; width: 0; height: 0; }
.en { font-size: 11px; }
.dim { color: #4a4a4a; }
.b { color: #2d8ceb; }
.panel { background: #232323; min-width: 0; min-height: 0; display: flex; flex-direction: column; }
.knob { width: 10px; height: 10px; border: 2px solid #999; border-radius: 50%; background: #232323; flex: none; }

input[type="checkbox"] { appearance: none; width: 14px; height: 14px; margin: 0; border: 2px solid #999; border-radius: 2px; }
.drop-sel {
  appearance: none;
  border: 1px solid #343434;
  border-radius: 3px;
  background: #1d1d1d url("data:image/svg+xml,%3Csvg xmlns='http://www.w3.org/2000/svg' width='9' height='6'%3E%3Cpath d='M.8 1l3.700 3.600L8.200 1' fill='none' stroke='%23aaa' stroke-width='1.200'/%3E%3C/svg%3E") no-repeat right 5px center;
  color: #c0c0c0;
  font: inherit;
}

/* top bar */
.topbar { height: 38px; flex: none; display: flex; align-items: center; background: #262626; margin-bottom: 4px; }
.grip { width: 3px; height: 19px; margin-left: 5px; background: repeating-linear-gradient(#444 0 1px, transparent 1px 3px); }
.home { margin: 0 0 0 11px; color: #b4b4b4; }
.spaces { flex: 0 0 auto; margin-left: auto; display: flex; gap: 46px; padding-right: 46px; border-right: 1px solid #151515; height: 38px; align-items: center; padding-bottom: 4px; }
.spaces a { position: relative; color: #929292; }
.spaces .on { color: #2d8ceb; }
.spaces .on svg { position: absolute; left: 41px; top: 6px; }
.more { margin: 0 639px 4px 16px; color: #b4b4b4; }

/* panel grid */
.work { flex: 1; min-height: 0; display: grid; grid-template-columns: minmax(0, 1fr) 339px; gap: 4px; padding-left: 1px; margin-bottom: 2px; }
.left { display: grid; grid-template-rows: minmax(0, 542fr) minmax(0, 385fr); gap: 4px; min-width: 0; min-height: 0; }
.toprow { display: grid; grid-template-columns: minmax(0, 776fr) minmax(0, 778fr); gap: 4px; min-height: 0; }
.botrow { display: grid; grid-template-columns: 282px 48px minmax(0, 1fr) 111px; gap: 4px; min-height: 0; }
.status { height: 11px; flex: none; background: #262626; overflow: hidden; padding-left: 2px; }

.tabs { display: flex; gap: 22px; height: 26px; padding-left: 11px; flex: none; }
.tab { display: flex; align-items: center; padding: 0 20px 0 0; color: #8c8c8c; }
.tab.on, .tab.lit { padding: 0 1px 0 2px; color: #c8c8c8; }
.tab.on { border-bottom: 2px solid #c8c8c8; }
.tab.src { padding-right: 16px; }
.tab svg { margin-left: 9px; }

/* effect controls */
.fxbox { flex: 1; min-height: 0; margin: 15px 17px 0 5px; display: flex; flex-direction: column; border-left: 1px solid #2f2f2f; }
.fxrow { display: flex; height: 21px; flex: none; }
.fxrow .l { flex: 0 0 460px; display: flex; align-items: center; background: #1d1d1d linear-gradient(#2d2d2d, #2d2d2d) 0 100% / 100% 1px no-repeat; border-right: 1px solid #2f2f2f; padding-right: 8px; }
.fxrow .r { flex: 1; min-width: 0; border-bottom: 1px solid #2a2a2a; background: #212121; }
.first { height: 22px; }
.fxrow.first .l { background-color: #232323; border-top: 1px solid #2f2f2f; }
.fxrow.first .r { border: 0; background: #232323; }
.master { width: 96px; padding-left: 5px; }
.seq { display: flex; align-items: center; gap: 11px; width: 110px; height: 20px; padding-left: 3px; background: #191919; color: #aaa; }
.seq a { color: #2d8ceb; }
.play { margin-left: auto; color: #aaa; }
.ruler { position: relative; display: flex; justify-content: space-between; padding-right: 18px; font-size: 12px; line-height: 19px; }
.ticks, .corners { position: absolute; left: 0; top: 0; }
.fxrow.sec .l { background-color: #191919; padding-left: 9px; }
.fxrow .clip { position: relative; background: #7199cd; color: #111; font-size: 11px; line-height: 21px; padding-left: 5px; }
.end { margin-left: auto; color: #b8b8b8; }
.sec .end { margin-right: -1px; }
.drop { position: relative; margin-right: 3px; }
.drop::after { content: ""; position: absolute; right: -7px; bottom: -2px; border: 3px solid transparent; border-top-color: #b8b8b8; border-bottom: 0; }
.chev { margin-left: 4px; color: #a0a0a0; }
.fx { width: 20px; margin-left: 10px; font-style: italic; color: #b4b4b4; }
.chev[width="9"] + .fx { margin-left: 7px; }
.fx.off { color: #484848; }
.fxrow.open .l { background-position: 20px 100%; }
.fxrow.sub .l { background-position: 34px 100%; }
.watch { margin: 0 7px 0 36px; color: #aaa; }
.sub label { width: 169px; }
.sub .name { width: 169px; margin-left: 55px; }
.short { height: 20px; }
.edit { width: 140px; height: 17px; border: 1px solid #777; border-radius: 9px; font-size: 11px; color: #9c9c9c; }
.par .chev { margin: 0 31px 0 18px; }
.fxrow.rest { flex: 1; height: auto; border-bottom: 1px solid #2f2f2f; }
.fxrow.rest .l { background-size: 0 0; }
.rest .r { display: flex; flex-direction: column; justify-content: flex-end; }
.fxrow.rest .r { border: 0; }
.hbar { height: 11px; border-radius: 6px; background: #313131; display: flex; align-items: center; }
.rest .hbar { padding-left: 2px; }
.fxtime { height: 20px; line-height: 23px; padding-left: 6px; color: #2d8ceb; font-size: 11px; flex: none; }

/* program monitor */
.program .tabs { padding-left: 12px; }
.video { flex: 1; margin: 15px 30px 0; background: #000; }
.pinfo { display: flex; align-items: center; justify-content: flex-end; height: 26px; padding-right: 30px; gap: 13px; color: #aaa; }
.pinfo select { width: 87px; height: 18px; padding: 0 6px; font-size: 11px; margin-right: -1px; }
.ptime { font-size: 14px; }
.pscrub { margin: 7px 13px 0 30px; }
.pscrub svg { margin-left: auto; }
.pscrub .hbar { justify-content: flex-end; }
.pbtns { display: flex; align-items: center; height: 39px; padding: 0 27px 0 448px; color: #b4b4b4; }
.pbtns button { width: 19px; margin-right: 16px; }
.pbtns button:first-child { margin-right: 25px; }
.pbtns .add { margin: 0 -1px 0 auto; width: 11px; }

/* project */
.project .tab.on { margin-right: 2px; }
.pfile { display: flex; align-items: center; gap: 15px; padding: 0 13px; height: 35px; margin-bottom: -2px; }
.psearch { display: flex; align-items: center; gap: 18px; padding-left: 13px; margin-bottom: 11px; color: #aaa; }
.field { display: flex; align-items: center; border: 1px solid #333; border-radius: 3px; background: #161616; padding: 0 5px; height: 21px; color: #b4b4b4; }
.psearch .field { width: 200px; }
.field input { flex: 1; min-width: 0; border: 0; outline: 0; background: none; padding: 0 0 0 10px; font-size: 12px; color: #c8c8c8; }
.bin { flex: 1; min-height: 0; margin: 0 13px; border: 1px solid #333; background: #1d1d1d; overflow: hidden; display: flex; flex-direction: column; justify-content: space-between; }
.bin table { width: 100%; table-layout: fixed; border-collapse: collapse; font-size: 11px; }
.bin th { height: 20px; padding: 0 0 0 6px; text-align: left; font-weight: 400; font-size: 13px; background: #262626; border-right: 1px solid #333; border-bottom: 1px solid #191919; color: #b4b4b4; overflow: hidden; }
.bin td { height: 24px; padding: 0 0 0 6px; border-bottom: 1px solid #2c2c2c; overflow: hidden; }
.c0 { width: 26px; } .c2 { width: 29px; }
.sel, .bin .sel td { background: #4a4a4a; }
.sw { display: block; width: 14px; height: 14px; border: 1px solid #333; }
.bin td:first-child { padding-left: 5px; }
.green { background: #4fb856; } .blue { background: #729acc; }
.item { display: flex; align-items: center; gap: 10px; padding-left: 23px; }
.thumb { width: 27px; height: 10px; border-radius: 5px; background: #333; margin: 0 0 1px 1px; }
.pfoot { display: flex; align-items: center; height: 46px; padding: 8px 0 0 16px; color: #b4b4b4; gap: 17px; }
.pfoot .glock { color: #1f9a1f; }
.pfoot svg:nth-child(4) { margin-left: -1px; }
.pfoot .clipped { width: 2px; height: 9px; margin-left: auto; background: #484848; }
.zoom { display: flex; align-items: center; margin-left: -5px; }
.zoom i { width: 56px; height: 2px; background: #444; margin-left: 2px; }

/* tools */
.tools { align-items: center; padding-top: 16px; color: #b4b4b4; gap: 1px; }
.tools button { width: 27px; height: 26px; position: relative; border-radius: 3px; }
.tools .on { background: #161616; border: 1px solid #333; color: #2d8ceb; }
.tools .m::after { content: ""; position: absolute; right: 1px; bottom: 1px; border: 2px solid transparent; border-right-color: #999; border-bottom-color: #999; }
.tools .type { font: 20px/20px "Liberation Serif", serif; font-weight: 700; }

/* timeline */
.tltabs { display: flex; align-items: center; height: 28px; padding-left: 9px; font-size: 12px; color: #b4b4b4; flex: none; }
.tltabs a { margin: 0 9px 0 10px; color: #c8c8c8; }
.tltabs .x { color: #888; width: 8px; }
.tltop { display: flex; height: 45px; flex: none; }
.tlctl { flex: 0 0 237px; padding-left: 18px; }
.tc { font-size: 16px; line-height: 26px; color: #2d8ceb; }
.tlicons { display: flex; align-items: center; justify-content: space-between; width: 150px; margin-left: 3px; color: #b4b4b4; height: 18px; }
.tlruler { flex: 1; position: relative; font-size: 11px; line-height: 46px; margin-right: 23px; overflow: hidden; }
.tlruler svg { position: absolute; left: 0; bottom: 0; }
.tlruler .ten { position: absolute; left: 620px; top: 0; }
.tlbody { flex: 1; display: flex; min-height: 0; background: #202020; padding-right: 13px; }
.tracks { flex: 1; min-width: 0; position: relative; display: flex; flex-direction: column; }
.trk { display: flex; height: 25px; flex: none; border-top: 1px solid #313131; }
.trk .h { flex: 0 0 237px; border-right: 1px solid #3a3a3a; display: flex; align-items: center; padding-left: 50px; background: #252525; color: #b4b4b4; }
.trk.gap { height: 66px; border: 0; }
.trk.gap .h, .trk.tail .h { background: none; }
.trk.tail { flex: 1; }
.trk.split { height: 4px; background: #262626; }
.lane { flex: 1; min-width: 0; }
.h b { width: 32px; height: 24px; margin-left: 5px; line-height: 25px; padding-right: 3px; font-size: 10px; font-weight: 400; text-align: center; color: #a0a0a0; }
.h b.on { background: #07568c; color: #b0cbe0; }
.h i, .h button { width: 27px; height: 24px; display: flex; align-items: center; justify-content: center; background: #202020; }
.h button { background: none; font-size: 10px; }
.h .mic { margin-left: 9px; }
.mn { margin-left: 8px; color: #929292; }
.mv { margin-left: 37px; font-size: 11px; color: #2d8ceb; }
.kf { margin: -6px 8px 0 auto; }
.vclip, .aclip { position: relative; width: 392px; height: 24px; border: 4px solid #e0e0e0; background: #7199cd; color: #111; font-size: 10px; line-height: 12px; display: flex; }
.aclip { background: #3b4d66; }
.vclip em, .aclip em { width: 12px; height: 11px; margin: -1px 7px 0 6px; border: 1px solid #aaa; background: #666; font-style: italic; font-size: 9px; line-height: 9px; text-align: center; z-index: 1; }
.aclip em { background: #a774d8; border-color: #d8c8e8; }
.wave { position: absolute; left: 0; top: 0; }
.cut { position: absolute; left: -4px; top: -4px; }
.playhead { position: absolute; left: 630px; top: 91px; bottom: 0; width: 1px; background: #3a87d8; }
.vbars { width: 10px; margin: 3px 0 0 1px; display: flex; flex-direction: column; gap: 5px; }
.vbar { flex: 137 0 0; border-radius: 5px; background: #323232; display: flex; flex-direction: column; justify-content: space-between; padding: 2px 0; }
.vbar.v2 { flex-grow: 139; }
.tlscroll { height: 11px; margin: 1px 24px 14px 13px; border: 1px solid #2c2c2c; border-radius: 6px; background: #1a1a1a; flex: none; display: flex; }
.tthumb { width: 163px; border-radius: 6px; background: #333; display: flex; justify-content: space-between; align-items: center; }

/* audio meters */
.mrow { display: flex; margin: 26px 0 0 12px; flex: 1; }
.mbox { width: 65px; border: 1px solid #000; display: flex; flex-direction: column; background: #1d1d1d; }
.mtop { height: 9px; display: flex; border-bottom: 1px solid #000; }
.mtop i { flex: 1; } .mtop i + i { border-left: 1px solid #000; }
.mmain { flex: 1; display: flex; gap: 1px; }
.mmain i { flex: 1; align-self: flex-end; height: 1px; margin-bottom: 1px; background: #f0f000; }
.solo { display: flex; gap: 14px; padding: 3px 0 11px 19px; }
.solo button { width: 18px; height: 18px; border: 1px solid #343434; border-radius: 3px; font-size: 10px; background: #1d1d1d; color: #b4b4b4; }
text { fill: #939393; }
text.w { fill: #fff; }
.t9 { font-size: 9px; }
.t11 { font-size: 11px; }
.mid { text-anchor: middle; }

/* effects */
.ehead { display: flex; align-items: center; justify-content: space-between; padding: 0 6px 0 13px; height: 26px; color: #c0c0c0; flex: none; }
.ehead h2 { margin: 0; font-size: 13px; font-weight: 400; }
.esearch { display: flex; align-items: center; padding: 5px 0 4px 4px; color: #aaa; }
.esearch .field { width: 210px; height: 20px; margin-right: 1px; }
.field button { margin-right: -2px; }
.brick { position: relative; margin-left: 10px; width: 16px; }
.brick + .brick { margin-left: 13px; }
.brick span { position: absolute; inset: 4px 0 0; display: flex; align-items: center; justify-content: center; color: #222; font-size: 9px; line-height: 9px; font-weight: 700; }
.brick.yuv span { font-size: 7px; }
.tree { margin: 0 1px 0 5px; padding: 0 0 5px; list-style: none; border: 1px solid #333; background: #212121; }
.tree li { display: flex; align-items: center; height: 20px; border-bottom: 1px solid #2a2a2a; }
.tree li > svg { color: #b4b4b4; }
.tree .chev { width: 9px; margin: 0 8px 0 3px; }
.tree .chev + svg { margin-right: 8px; }
.tree .fxi { margin: 0 8px 0 34px; }
.efoot { display: flex; justify-content: flex-end; align-items: center; gap: 13px; padding-right: 18px; height: 21px; color: #b4b4b4; }
.efoot .dim { color: #4a4a4a; }
.acc { display: flex; flex-direction: column; border-bottom: 2px solid #161616; }
.acc a { height: 30px; line-height: 28px; padding-left: 13px; border-top: 2px solid #161616; color: #8c8c8c; }

/* floating effect editor */
.dialog { position: absolute; left: 709px; top: 117px; width: 504px; height: 635px; background: #242424; display: flex; flex-direction: column; box-shadow: 0 4px 14px rgba(0, 0, 0, .5); }
.dtitle { height: 30px; flex: none; display: flex; align-items: center; justify-content: space-between; padding: 0 1px 0 8px; background: #fff; color: #111; font-size: 12px; }
.dtitle button { width: 19px; height: 19px; margin-top: 3px; background: #c75050; color: #fff; font-weight: 700; font-size: 11px; }
.dbar { height: 34px; flex: none; display: flex; align-items: center; padding: 2px 12px 0; border-bottom: 2px solid #303030; color: #929292; }
.sep { width: 2px; height: 18px; margin: 0 9px 0 7px; background: #343434; }
.dbar select { width: 300px; height: 20px; margin-left: 8px; padding: 0 6px; }
.sep.far { margin: 0 10px 0 auto; }
.dbar .mx { margin-left: 14px; }
.dbar svg { color: #aaa; }
.dbody { flex: 1; min-height: 0; margin: 5px; border: 1px solid #323232; border-radius: 3px; display: flex; flex-direction: column; padding: 0 13px 0 4px; }
.dtabs { display: flex; gap: 29px; height: 26px; padding-left: 9px; flex: none; color: #8c8c8c; }
.dtabs a { height: 25px; line-height: 27px; padding: 0 1px; }
.dtabs .on { border-bottom: 2px solid #c0c0c0; color: #c0c0c0; }
.graphs { display: flex; margin-top: 6px; flex: none; }
.chart { outline: 1px solid #303030; outline-offset: -1px; }
.gain { margin: 1px 0 0 14px; }
.dctl { display: flex; align-items: center; height: 29px; padding-left: 6px; flex: none; gap: 12px; color: #b4b4b4; border-bottom: 2px solid #303030; }
.spl { display: flex; align-items: center; gap: 6px; margin-left: 3px; color: #929292; }
.mk { margin-left: 2px; color: #929292; }
.zero { color: #2d8ceb; font-size: 11px; margin: 0 -8px 0 6px; }
.segs { width: 100%; border-collapse: collapse; table-layout: fixed; flex: none; }
.segs th { height: 22px; padding: 0 0 0 6px; text-align: left; font-weight: 400; color: #8c8c8c; }
.segs th + th { border-left: 1px solid #2c2c2c; }
.segs th:nth-child(-n+3) { width: 81px; }
.segs th:nth-child(4) { width: 93px; }
.segs td { height: 19px; padding: 0 0 0 7px; line-height: 18px; border-top: 1px solid #2f2f2f; border-bottom: 1px solid #2f2f2f; background: #1d1d1d; color: #b0b0b0; }
.segs td:nth-child(3) { padding-left: 8px; }
.segrest { flex: 1; background: #1d1d1d; border: solid #2f2f2f; border-width: 0 1px; }

/* callouts */
.notes { position: absolute; left: 0; top: 0; pointer-events: none; color: #ff1f10; font-size: 21px; line-height: 28px; }
.notes p { position: absolute; margin: 0; }
.cjk { font-family: "Noto Sans CJK SC", sans-serif; }
.n1 { left: 1246px; top: 134px; }
.n2 { left: 1200px; top: 597px; }
.n3 { left: 431px; top: 466px; }
.n4 { left: 831px; top: 190px; }
```
